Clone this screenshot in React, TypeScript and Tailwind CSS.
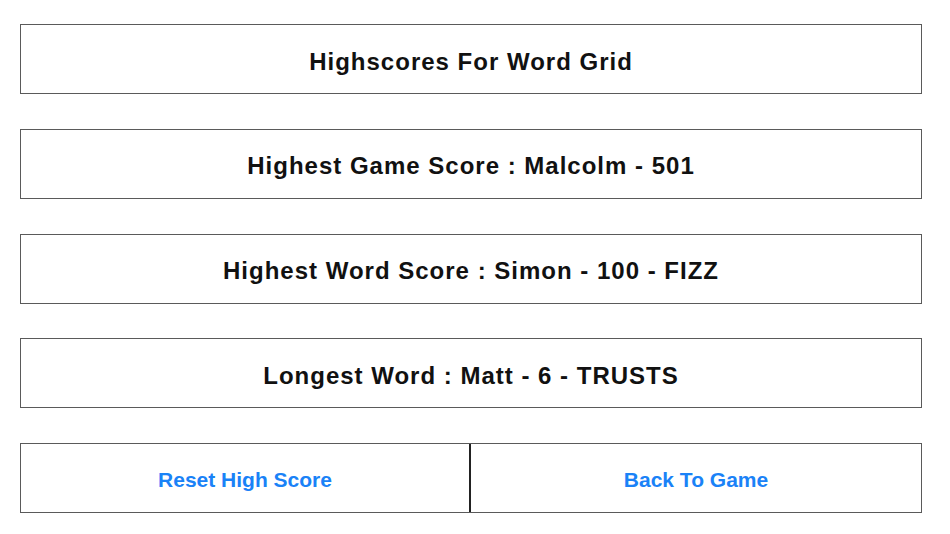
import React from 'react';

const rows = [
  'Highscores For Word Grid',
  'Highest Game Score : Malcolm - 501',
  'Highest Word Score : Simon - 100 - FIZZ',
  'Longest Word : Matt - 6 - TRUSTS',
];

export default function App() {
  return (
    <div
      className="w-[950px] h-[534px] bg-white pt-[24px] pl-[20px]"
      style={{ fontFamily: '"Liberation Sans", Arial, sans-serif' }}
    >
      <div className="w-[902px] flex flex-col gap-[34.75px]">
        {rows.map((text) => (
          <div
            key={text}
            className="h-[70px] border border-[#5a5a5a] flex items-center justify-center pt-[5px] text-[24px] font-bold text-[#111] tracking-[1px]"
          >
            {text}
          </div>
        ))}

        {/* action buttons */}
        <div className="h-[70px] border border-[#5a5a5a] flex">
          <button className="w-[450px] h-full border-r-2 border-[#222] flex items-center justify-center pt-[4px] text-[21px] font-bold text-[#1a82f7]">
            Reset High Score
          </button>
          <button className="flex-1 h-full flex items-center justify-center pt-[4px] text-[21px] font-bold text-[#1a82f7]">
            Back To Game
          </button>
        </div>
      </div>
    </div>
  );
}
